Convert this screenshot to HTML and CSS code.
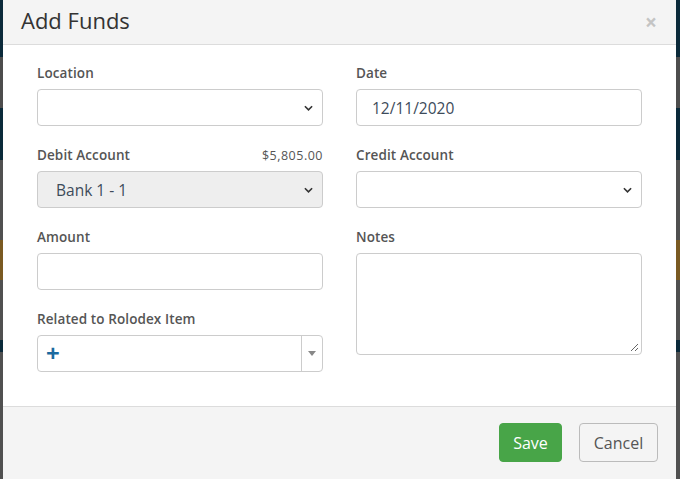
FILE: index.html
```html
<!DOCTYPE html>
<html>
<head>
<meta charset="utf-8">
<link rel="stylesheet" href="styles.css">
</head>
<body>
<div class="backdrop">
  <div class="modal">
    <div class="modal-header">
      <h1 class="title">Add Funds</h1>
      <span class="close">&times;</span>
    </div>
    <div class="modal-body">
      <div class="col">
        <div class="group">
          <div class="label-row"><label>Location</label></div>
          <div class="control select"><span class="value"></span><svg class="chev" viewBox="0 0 10 6" width="9" height="6"><path d="M1 1 L5 5 L9 1" fill="none" stroke="#333" stroke-width="1.8"/></svg></div>
        </div>
        <div class="group">
          <div class="label-row"><label>Debit Account</label><span class="balance">$5,805.00</span></div>
          <div class="control select disabled"><span class="value">Bank 1 - 1</span><svg class="chev" viewBox="0 0 10 6" width="9" height="6"><path d="M1 1 L5 5 L9 1" fill="none" stroke="#333" stroke-width="1.8"/></svg></div>
        </div>
        <div class="group">
          <div class="label-row"><label>Amount</label></div>
          <div class="control"></div>
        </div>
        <div class="group">
          <div class="label-row"><label>Related to Rolodex Item</label></div>
          <div class="control combo">
            <span class="plus">+</span>
            <span class="combo-arrow"><svg viewBox="0 0 8 5" width="8" height="5"><path d="M0 0 L8 0 L4 5 Z" fill="#888"/></svg></span>
          </div>
        </div>
      </div>
      <div class="col">
        <div class="group">
          <div class="label-row"><label>Date</label></div>
          <div class="control"><span class="value">12/11/2020</span></div>
        </div>
        <div class="group">
          <div class="label-row"><label>Credit Account</label></div>
          <div class="control select"><span class="value"></span><svg class="chev" viewBox="0 0 10 6" width="9" height="6"><path d="M1 1 L5 5 L9 1" fill="none" stroke="#333" stroke-width="1.8"/></svg></div>
        </div>
        <div class="group">
          <div class="label-row"><label>Notes</label></div>
          <div class="control textarea">
            <svg class="grip" viewBox="0 0 10 10" width="10" height="10"><path d="M9 2 L2 9 M9 6 L6 9" stroke="#666" stroke-width="1"/></svg>
          </div>
        </div>
      </div>
    </div>
    <div class="modal-footer">
      <button class="btn btn-save">Save</button>
      <button class="btn btn-cancel">Cancel</button>
    </div>
  </div>
</div>
</body>
</html>
```
FILE: styles.css
```css
html, body {
  margin: 0;
  padding: 0;
  height: 100%;
  overflow: hidden;
}
body {
  font-family: "Open Sans", "DejaVu Sans", sans-serif;
  color: #555;
}
.backdrop {
  height: 479px;
  background:
    linear-gradient(to bottom,
      #0b2a3a 0px, #0b2a3a 57px,
      #4d4d4d 57px, #4d4d4d 108px,
      #0b2a3a 108px, #0b2a3a 160px,
      #505050 160px, #505050 240px,
      #7a5a22 240px, #7a5a22 280px,
      #505050 280px, #505050 340px,
      #0b2a3a 340px, #0b2a3a 352px,
      #505050 352px, #505050 479px);
  display: flex;
}
.modal {
  margin-left: 3px;
  width: 673px;
  background: #fff;
  display: flex;
  flex-direction: column;
}
.modal-header {
  height: 44px;
  background: #f4f4f4;
  border-bottom: 1px solid #dcdcdc;
  display: flex;
  align-items: center;
  justify-content: space-between;
  padding: 0 19px 0 18px;
}
.title {
  margin: 0;
  font-size: 22px;
  font-weight: 400;
  color: #333;
  line-height: 1;
  padding-bottom: 4px;
}
.close {
  font-size: 21px;
  color: #c4c4c4;
  font-weight: 700;
  line-height: 1;
}
.modal-body {
  display: grid;
  grid-template-columns: 286px 286px;
  column-gap: 33px;
  padding: 18px 34px 34px 34px;
}
.col {
  display: flex;
  flex-direction: column;
  gap: 19px;
}
.group {
  display: flex;
  flex-direction: column;
  gap: 8px;
}
.label-row {
  box-sizing: border-box;
  height: 18px;
  padding-top: 2px;
  display: flex;
  align-items: center;
  justify-content: space-between;
}
label {
  font-size: 13.5px;
  font-weight: 600;
  color: #555;
  letter-spacing: 0.1px;
}
.balance {
  font-size: 12.5px;
  color: #555;
  letter-spacing: 0.5px;
}
.control {
  box-sizing: border-box;
  height: 37px;
  border: 1px solid #ccc;
  border-radius: 4px;
  background: #fff;
  display: flex;
  align-items: center;
  padding: 0 9px 0 15px;
  position: relative;
}
.value {
  flex: 1;
  font-size: 15.5px;
  color: #3d4b5a;
}
.select.disabled {
  background: #eee;
}
.select.disabled .value {
  padding-left: 3px;
}
.combo {
  padding: 0;
}
.plus {
  flex: 1;
  padding-left: 8px;
  font-size: 24px;
  font-weight: 700;
  color: #1a6aa0;
  line-height: 1;
  margin-top: -2px;
}
.combo-arrow {
  width: 20px;
  height: 100%;
  border-left: 1px solid #ccc;
  display: flex;
  align-items: center;
  justify-content: center;
}
.textarea {
  height: 102px;
  align-items: flex-end;
  justify-content: flex-end;
  padding: 0 2px 2px 0;
}
.modal-footer {
  flex: 1;
  background: #f4f4f4;
  border-top: 1px solid #dcdcdc;
  display: flex;
  justify-content: flex-end;
  align-items: flex-start;
  gap: 17px;
  padding: 16px 18px 0 0;
}
.btn {
  font-family: "Open Sans", "DejaVu Sans", sans-serif;
  height: 39px;
  border-radius: 4px;
  font-size: 16px;
  padding: 0;
  cursor: pointer;
}
.btn-save {
  width: 63px;
  background: #48a548;
  border: 1px solid #48a548;
  color: #fff;
}
.btn-cancel {
  width: 79px;
  background: #f4f4f4;
  border: 1px solid #bbb;
  color: #555;
}
```
